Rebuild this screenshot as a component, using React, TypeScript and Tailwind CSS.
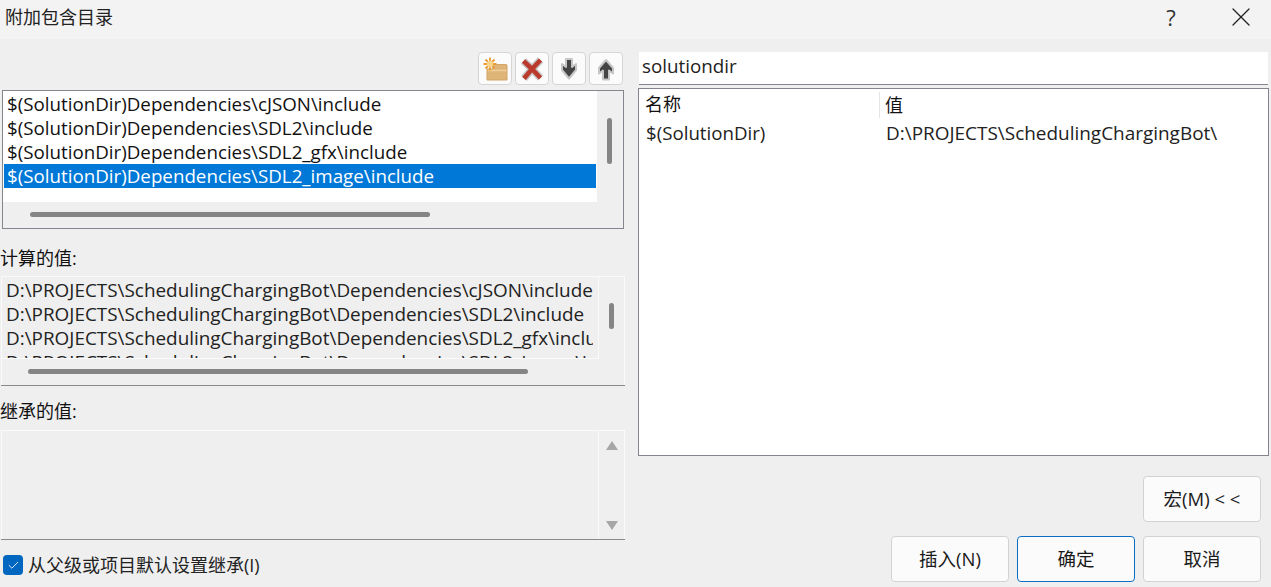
import React from 'react';
import { X, Check } from 'lucide-react';

const FONT = "font-['Open_Sans','Noto_Sans_CJK_SC',sans-serif]";

const includeDirs = [
  '$(SolutionDir)Dependencies\\cJSON\\include',
  '$(SolutionDir)Dependencies\\SDL2\\include',
  '$(SolutionDir)Dependencies\\SDL2_gfx\\include',
  '$(SolutionDir)Dependencies\\SDL2_image\\include',
];

const evaluated = [
  'D:\\PROJECTS\\SchedulingChargingBot\\Dependencies\\cJSON\\include',
  'D:\\PROJECTS\\SchedulingChargingBot\\Dependencies\\SDL2\\include',
  'D:\\PROJECTS\\SchedulingChargingBot\\Dependencies\\SDL2_gfx\\include',
  'D:\\PROJECTS\\SchedulingChargingBot\\Dependencies\\SDL2_image\\include',
];

const ToolButton: React.FC<{ children: React.ReactNode }> = ({ children }) => (
  <button className="w-[34px] h-[33px] flex items-center justify-center bg-[#fbfbfb] border border-[#d5d5d5] rounded-[4px]">
    {children}
  </button>
);

const NewFolderIcon = () => (
  <svg width="28" height="26" viewBox="0 0 28 26">
    <path d="M12 8.500h13a1 1 0 0 1 1 1V24H6V13h6z" fill="#dfb477" stroke="#d3a566" strokeWidth="1" />
    <path d="M7 14.500h18.500" stroke="#efd09c" strokeWidth="1.500" />
    <path d="M9 1.500v13M2.500 8h13M4.500 3.500l9 9M13.500 3.500l-9 9" stroke="#e79b35" strokeWidth="1.800" />
    <circle cx="9" cy="8" r="3.200" fill="#f9d48a" />
  </svg>
);

const DeleteIcon = () => (
  <svg width="26" height="26" viewBox="0 0 26 26">
    <path d="M4.500 5L13 13 21.500 4M5 22.500l8-9.500 8.500 9" fill="none" stroke="#c4c4c4" strokeWidth="7.500" strokeLinejoin="round" />
    <path d="M4.500 5L13 13 21.500 4M5 22.500l8-9.500 8.500 9" fill="none" stroke="#bb3a2e" strokeWidth="4.500" />
  </svg>
);

const ArrowDownIcon = () => (
  <svg width="22" height="24" viewBox="0 0 22 24">
    <path d="M8 2h6v8l4-3v6l-7 8.500L4 13V7l4 3z" fill="#444" stroke="#c6c6c6" strokeWidth="2" strokeLinejoin="round" />
  </svg>
);

const ArrowUpIcon = () => (
  <svg width="22" height="24" viewBox="0 0 22 24">
    <path d="M8 22.500h6v-9l4 3V11L11 3 4 11v5.500l4-3z" fill="#444" stroke="#c6c6c6" strokeWidth="2" strokeLinejoin="round" />
  </svg>
);

const DialogButton: React.FC<{ label: string; primary?: boolean }> = ({ label, primary }) => (
  <button
    className={`w-[118px] h-[46px] rounded-[4px] bg-[#fbfbfb] border text-[18.500px] text-[#1a1a1a] flex items-center justify-center ${
      primary ? 'border-[#0a6fc4]' : 'border-[#d3d3d3]'
    }`}
  >
    {label}
  </button>
);

const App: React.FC = () => {
  return (
    <div className={`w-[1271px] h-[587px] overflow-hidden flex flex-col bg-[#efefef] text-[18px] leading-[24px] text-[#111] ${FONT}`}>
      {/* title bar */}
      <div className="h-[39px] shrink-0 bg-[#f3f3f3] flex items-center pl-[5px] pr-[14px]">
        <span className="flex-1 pb-[6px] text-[#222]">附加包含目录</span>
        <span className="text-[22px] text-[#333] w-[24px] text-center pb-[6px] mr-[42px]">?</span>
        <span className="pb-[6px]">
          <X size={32} strokeWidth={0.95} className="text-[#222]" />
        </span>
      </div>

      <div className="flex-1 flex min-h-0">
        {/* left column */}
        <div className="w-[625px] shrink-0 flex flex-col pl-[1px]">
          <div className="flex justify-end gap-[3px] pt-[13px] pr-[2px]">
            <ToolButton><NewFolderIcon /></ToolButton>
            <ToolButton><DeleteIcon /></ToolButton>
            <ToolButton><ArrowDownIcon /></ToolButton>
            <ToolButton><ArrowUpIcon /></ToolButton>
          </div>

          <div className="mt-[5px] ml-[1px] mr-[1px] h-[139px] border border-[#83868d] flex">
            <div className="w-[594px] shrink-0 flex flex-col">
              <div className="h-[111px] bg-white pt-[1px] pl-[1px] pr-[1px]">
                {includeDirs.map((dir, i) => (
                  <div
                    key={dir}
                    className={`h-[24px] pl-[3px] text-[18.750px] whitespace-nowrap overflow-hidden ${
                      i === 3 ? 'bg-[#0078d7] text-white' : ''
                    }`}
                  >
                    {dir}
                  </div>
                ))}
              </div>
              <div className="pt-[10px] pl-[27px]">
                <div className="w-[400px] h-[5px] rounded-full bg-[#858585]" />
              </div>
            </div>
            <div className="pl-[10px] pt-[27px]">
              <div className="w-[5px] h-[46px] rounded-full bg-[#858585]" />
            </div>
          </div>

          <div className="mt-[17px] h-[24px] -ml-[1px]">计算的值:</div>

          <div className="mt-[6px] h-[109px] flex border-t border-l border-r border-[#fafafa] shadow-[0_1px_0_#8a8a8a]">
            <div className="w-[597px] shrink-0 flex flex-col">
              <div className="h-[82px] overflow-hidden border-r border-b border-[#fafafa] pt-[1px] pl-[4px] text-[18.900px] text-[#222]">
                {evaluated.map((line) => (
                  <div key={line} className="h-[24px] whitespace-nowrap overflow-hidden w-[587px]">
                    {line}
                  </div>
                ))}
              </div>
              <div className="pt-[10px] pl-[26px]">
                <div className="w-[500px] h-[5px] rounded-full bg-[#858585]" />
              </div>
            </div>
            <div className="pl-[10px] pt-[26px]">
              <div className="w-[5px] h-[26px] rounded-full bg-[#858585]" />
            </div>
          </div>

          <div className="mt-[14px] h-[24px] -ml-[1px]">继承的值:</div>

          <div className="mt-[7px] h-[109px] flex border-t border-l border-r border-[#fafafa] shadow-[0_1px_0_#8a8a8a]">
            <div className="w-[597px] shrink-0 border-r border-[#fafafa]" />
            <div className="flex-1 flex flex-col items-center justify-between pt-[10px] pb-[9px]">
              <div className="w-0 h-0 border-l-[6px] border-r-[6px] border-b-[9px] border-l-transparent border-r-transparent border-b-[#a6a6a6]" />
              <div className="w-0 h-0 border-l-[6px] border-r-[6px] border-t-[9px] border-l-transparent border-r-transparent border-t-[#a6a6a6]" />
            </div>
          </div>

          <div className="mt-[14px] flex items-center gap-[5px] pl-[2px]">
            <span className="w-[20px] h-[20px] rounded-[4px] bg-[#0067c0] flex items-center justify-center">
              <Check size={13} strokeWidth={1.6} className="text-white" />
            </span>
            <span className="text-[#222]">从父级或项目默认设置继承(I)</span>
          </div>
        </div>

        {/* right column */}
        <div className="flex-1 flex flex-col pl-[13px] pr-[2px] text-[18.800px]">
          <div className="mt-[13px] ml-[1px] mr-[1px] h-[33px] bg-white border-b border-[#83868d] pl-[3px] pb-[5px] flex items-center text-[#222]">
            solutiondir
          </div>
          <div className="mt-[3px] h-[368px] bg-white border border-[#83868d] pt-[2px]">
            <div className="flex h-[28px] items-center text-[18px]">
              <div className="w-[241px] h-[26px] pl-[6px] border-r border-[#e5e5e5]">名称</div>
              <div className="pl-[5px]">值</div>
            </div>
            <div className="flex h-[28px] items-center text-[#222]">
              <div className="w-[242px] pl-[7px] text-[18.700px]">$(SolutionDir)</div>
              <div className="pl-[5px] text-[18.950px]">D:\PROJECTS\SchedulingChargingBot\</div>
            </div>
          </div>
          <div className="mt-[20px] flex justify-end pr-[8px]">
            <DialogButton label="宏(M) < <" />
          </div>
          <div className="mt-[14px] flex justify-end gap-[8px] pr-[8px]">
            <DialogButton label="插入(N)" />
            <DialogButton label="确定" primary />
            <DialogButton label="取消" />
          </div>
        </div>
      </div>
    </div>
  );
};

export default App;
